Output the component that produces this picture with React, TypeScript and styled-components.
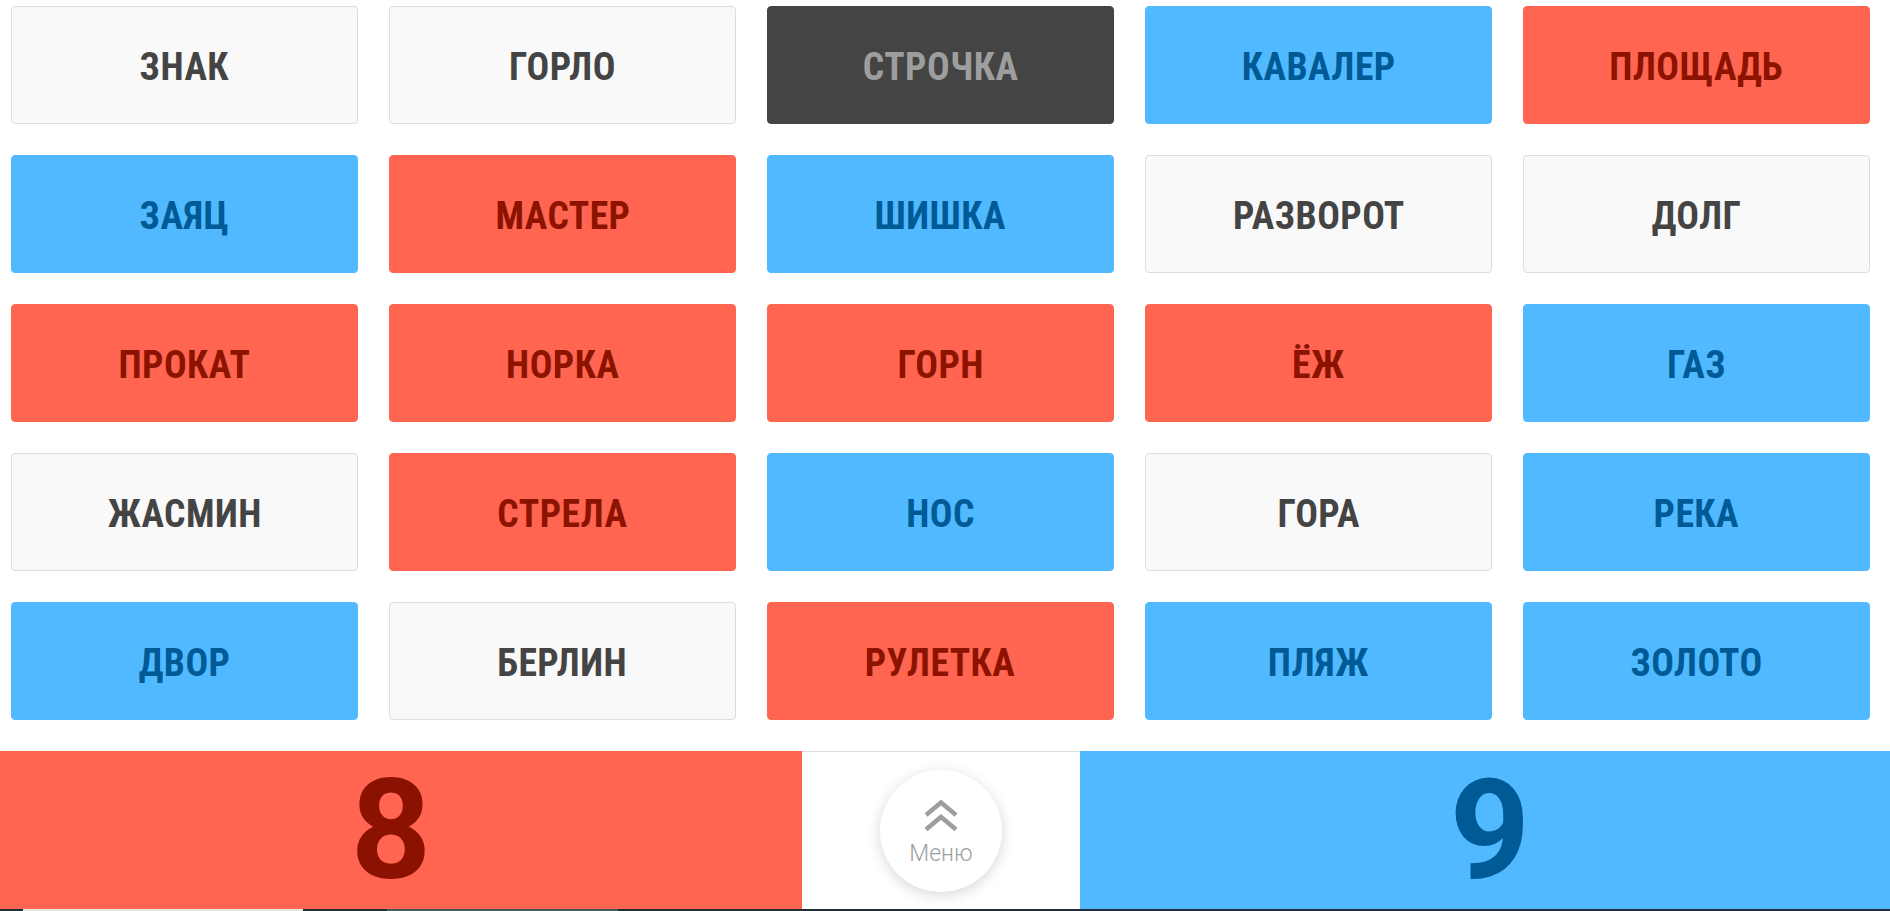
import React from 'react';
import styled, { createGlobalStyle, css } from 'styled-components';

type Team = 'red' | 'blue' | 'neutral' | 'killer';

const GlobalStyle = createGlobalStyle`
  html, body {
    margin: 0;
    padding: 0;
    background: #ffffff;
    font-family: Roboto, "Noto Sans", sans-serif;
  }
  * {
    box-sizing: border-box;
  }
`;

const palette = {
  red: { bg: '#ff6551', fg: '#8b1300', border: '#ff6551' },
  blue: { bg: '#50b9ff', fg: '#005a96', border: '#50b9ff' },
  neutral: { bg: '#f9f9f9', fg: '#444444', border: '#dddddd' },
  killer: { bg: '#444444', fg: '#9e9e9e', border: '#444444' },
};

const Page = styled.div`
  display: flex;
  flex-direction: column;
  height: 911px;
  overflow: hidden;
`;

const Board = styled.div`
  display: grid;
  grid-template-columns: repeat(5, 1fr);
  grid-auto-rows: 118px;
  gap: 31px;
  padding: 6px 20px 0 11px;
`;

const Card = styled.div<{ $team: Team }>`
  ${({ $team }) => css`
    display: flex;
    align-items: center;
    justify-content: center;
    padding-top: 4px;
    border-radius: 4px;
    background: ${palette[$team].bg};
    border: 1px solid ${palette[$team].border};
    color: ${palette[$team].fg};
  `}
`;

const Word = styled.span`
  font-family: "Roboto Condensed", Roboto, sans-serif;
  font-weight: 700;
  font-size: 39px;
  font-stretch: condensed;
  letter-spacing: 0.5px;
  display: inline-block;
  transform: scaleX(0.965);
`;

const ScoreBar = styled.div`
  display: grid;
  grid-template-columns: 802px 278px 1fr;
  height: 158px;
  margin-top: 31px;
`;

const Score = styled.div<{ $team: 'red' | 'blue' }>`
  display: flex;
  align-items: center;
  justify-content: center;
  background: ${({ $team }) => palette[$team].bg};
  color: ${({ $team }) => ($team === 'red' ? '#8b1200' : '#005a96')};
  font-family: Roboto, sans-serif;
  font-weight: 700;
  font-size: 140px;
  line-height: 158px;
  padding: ${({ $team }) => ($team === 'red' ? '0 20px 0 0' : '0 0 0 10px')};
`;

const Middle = styled.div`
  display: flex;
  align-items: center;
  justify-content: center;
  background: #ffffff;
  border-top: 1px solid #dddddd;
`;

const MenuButton = styled.button`
  width: 122px;
  height: 122px;
  border-radius: 50%;
  border: none;
  background: #ffffff;
  box-shadow: 0 3px 14px rgba(0, 0, 0, 0.16);
  display: flex;
  flex-direction: column;
  align-items: center;
  justify-content: center;
  gap: 10px;
  padding: 4px 0 0;
  cursor: pointer;
  color: #9e9e9e;
`;

const MenuLabel = styled.span`
  font-family: Roboto, sans-serif;
  font-weight: 300;
  font-size: 23px;
  line-height: 1;
`;

const BottomStrip = styled.div`
  display: flex;
  height: 2px;
  background: #1f2d38;
`;

const StripSegment = styled.div<{ $w: number; $c: string }>`
  width: ${({ $w }) => $w}px;
  background: ${({ $c }) => $c};
`;

const words: [string, Team][] = [
  ['ЗНАК', 'neutral'],
  ['ГОРЛО', 'neutral'],
  ['СТРОЧКА', 'killer'],
  ['КАВАЛЕР', 'blue'],
  ['ПЛОЩАДЬ', 'red'],
  ['ЗАЯЦ', 'blue'],
  ['МАСТЕР', 'red'],
  ['ШИШКА', 'blue'],
  ['РАЗВОРОТ', 'neutral'],
  ['ДОЛГ', 'neutral'],
  ['ПРОКАТ', 'red'],
  ['НОРКА', 'red'],
  ['ГОРН', 'red'],
  ['ЁЖ', 'red'],
  ['ГАЗ', 'blue'],
  ['ЖАСМИН', 'neutral'],
  ['СТРЕЛА', 'red'],
  ['НОС', 'blue'],
  ['ГОРА', 'neutral'],
  ['РЕКА', 'blue'],
  ['ДВОР', 'blue'],
  ['БЕРЛИН', 'neutral'],
  ['РУЛЕТКА', 'red'],
  ['ПЛЯЖ', 'blue'],
  ['ЗОЛОТО', 'blue'],
];

const ChevronsUp = () => (
  <svg width="34" height="32" viewBox="0 0 34 32" fill="none">
    <path d="M2 15 L17 2.5 L32 15" stroke="#9e9e9e" strokeWidth="4.5" />
    <path d="M2 29.5 L17 17 L32 29.5" stroke="#9e9e9e" strokeWidth="4.5" />
  </svg>
);

export default function App() {
  return (
    <Page>
      <GlobalStyle />
      <Board>
        {words.map(([w, t]) => (
          <Card key={w} $team={t}>
            <Word>{w}</Word>
          </Card>
        ))}
      </Board>
      <ScoreBar>
        <Score $team="red">8</Score>
        <Middle>
          <MenuButton>
            <ChevronsUp />
            <MenuLabel>Меню</MenuLabel>
          </MenuButton>
        </Middle>
        <Score $team="blue">9</Score>
      </ScoreBar>
      <BottomStrip>
        <StripSegment $w={23} $c="#1f2d38" />
        <StripSegment $w={280} $c="#e6e6e6" />
        <StripSegment $w={84} $c="#1f2d38" />
        <StripSegment $w={231} $c="#455a64" />
      </BottomStrip>
    </Page>
  );
}
